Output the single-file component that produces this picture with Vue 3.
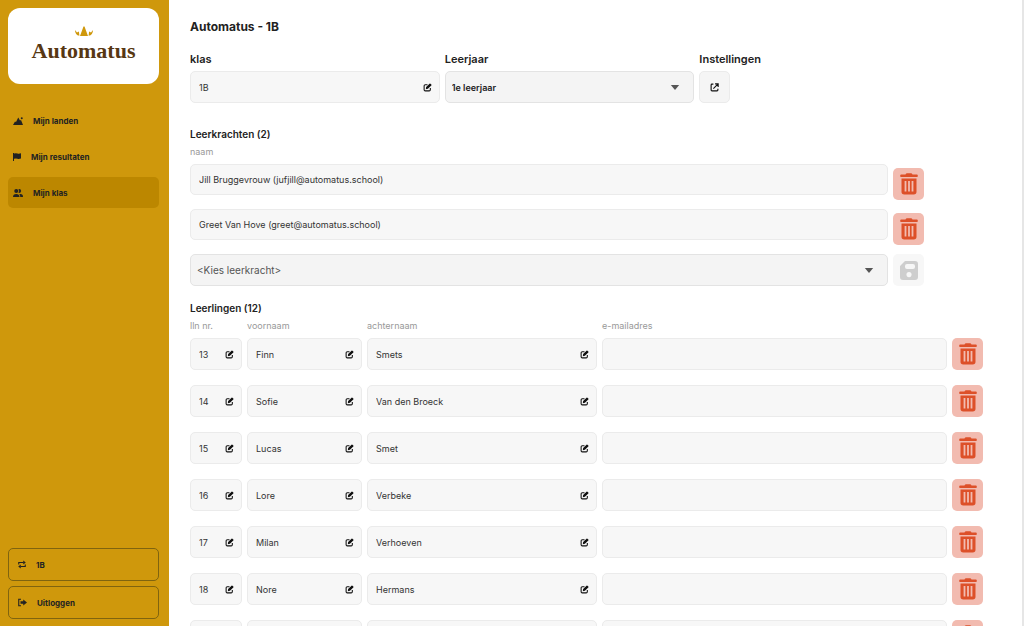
<script setup>
import { ref } from 'vue'

const klas = ref('1B')
const leerjaar = ref('1e leerjaar')
const nieuweLeerkracht = ref('')

const leerkrachten = ref([
  'Jill Bruggevrouw (jufjill@automatus.school)',
  'Greet Van Hove (greet@automatus.school)',
])

const leerlingen = ref([
  { nr: '13', voornaam: 'Finn', achternaam: 'Smets', email: '' },
  { nr: '14', voornaam: 'Sofie', achternaam: 'Van den Broeck', email: '' },
  { nr: '15', voornaam: 'Lucas', achternaam: 'Smet', email: '' },
  { nr: '16', voornaam: 'Lore', achternaam: 'Verbeke', email: '' },
  { nr: '17', voornaam: 'Milan', achternaam: 'Verhoeven', email: '' },
  { nr: '18', voornaam: 'Nore', achternaam: 'Hermans', email: '' },
  { nr: '19', voornaam: '', achternaam: '', email: '' },
])
</script>

<template>
  <svg class="sprite" aria-hidden="true">
    <symbol id="edit" viewBox="0 0 16 16">
      <path d="M8 3H4Q2 3 2 5v7q0 2 2 2h7q2 0 2-2V9" fill="none" stroke="currentColor" stroke-width="1.9" />
      <path d="M5 11l.6-3.800L11.600 1.200q.8-.8 1.600 0l1.600 1.600q.8.8 0 1.600L8.800 10.400z" fill="currentColor" />
    </symbol>
    <symbol id="trash" viewBox="0 0 18 22">
      <path fill="currentColor" fill-rule="evenodd" d="M5.500 1.500q.4-1.200 1.600-1.200h3.800q1.200 0 1.600 1.200h4.300q1 0 1 1v.700q0 .8-.8.8H1q-.8 0-.8-.8v-.7q0-1 1-1zM1.500 5.500h15v13.300q0 2.700-2.700 2.700H4.200q-2.700 0-2.700-2.700zM4.600 8v10.500h1.800V8zM8.100 8v10.500h1.800V8zM11.600 8v10.500h1.800V8z" />
    </symbol>
  </svg>
  <div class="app">
    <aside class="sidebar">
      <div class="logo">
        <svg class="crown" viewBox="0 0 18 10" aria-hidden="true">
          <path fill="#cf980c" d="M5 10L8.400.8Q9-.3 9.600.8L13 10zM4.400 9.800L3.900 5.500 2 6.500 0 4q0 5 4.400 5.800zM13.600 9.800l.5-4.300 1.900 1L18 4q0 5-4.400 5.800z" />
        </svg>
        <span class="wordmark">Automatus</span>
      </div>
      <nav class="nav">
        <a href="#landen">
          <svg width="10" height="8" viewBox="0 0 20 16" aria-hidden="true"><path fill="currentColor" d="M0 16L4 9l2 1 4.500-9L14 7l2-1 4 10z" /><circle cx="17.500" cy="2.500" r="2" fill="currentColor" /></svg>
          Mijn landen
        </a>
        <a href="#resultaten">
          <svg width="8" height="8" viewBox="0 0 16 16" aria-hidden="true"><path fill="currentColor" d="M0 0h2v1q4-1 7 0 3 1 7-.5V11q-4 1.500-7 .5-3-1-7 0v4.500H0z" /></svg>
          Mijn resultaten
        </a>
        <a href="#klas" class="active" aria-current="page">
          <svg width="10" height="8" viewBox="0 0 20 16" aria-hidden="true"><path fill="currentColor" d="M0 16q0-6 6.500-6t6.500 6zM14.500 16q.2-3.500-2-5.500Q20 9 20 16z" /><circle cx="6.500" cy="4.200" r="4" fill="currentColor" /><path fill="currentColor" d="M10.800 8q2-3.500 0-7.500 5-1.500 5.500 3.500-.5 5-5.500 4z" /></svg>
          Mijn klas
        </a>
      </nav>
      <div class="actions">
        <button type="button">
          <svg width="8" height="9" viewBox="0 0 16 16" aria-hidden="true"><path d="M1.500 8V4H11M14.500 8v4H5" fill="none" stroke="currentColor" stroke-width="2.200" /><path fill="currentColor" d="M10.500 0l5 4-5 4zM5.500 8l-5 4 5 4z" /></svg>
          <span>1B</span>
        </button>
        <button type="button">
          <svg width="9" height="9" viewBox="0 0 18 16" aria-hidden="true"><path d="M6 1.500H1.500v13H6" fill="none" stroke="currentColor" stroke-width="2.200" /><path fill="currentColor" d="M5 5.500h5.500V2L18 8l-7.500 6v-3.500H5z" /></svg>
          <span>Uitloggen</span>
        </button>
      </div>
    </aside>

    <main class="content">
      <h1>Automatus - 1B</h1>

      <section class="settings">
        <div>
          <label for="klas">klas</label>
          <div class="field">
            <input id="klas" v-model="klas" type="text" />
            <svg class="pencil"><use href="#edit" /></svg>
          </div>
        </div>
        <div>
          <label for="leerjaar">Leerjaar</label>
          <div class="field">
            <select id="leerjaar" v-model="leerjaar" class="year">
              <option>1e leerjaar</option>
              <option>2e leerjaar</option>
            </select>
            <svg class="caret" viewBox="0 0 10 6"><path d="M0 0h10L5 6z" /></svg>
          </div>
        </div>
        <div>
          <label for="instellingen">Instellingen</label>
          <button id="instellingen" type="button" class="square" title="Instellingen">
            <svg width="9" height="9" viewBox="0 0 16 16" aria-hidden="true"><path d="M6 2H3.500Q2 2 2 3.500v9Q2 14 3.500 14h9q1.500 0 1.500-1.500V10M6 10l7.500-7.500M9 1.500h5.500V7" fill="none" stroke="currentColor" stroke-width="2" /></svg>
          </button>
        </div>
      </section>

      <section class="teachers">
        <h2>Leerkrachten (2)</h2>
        <p class="caption">naam</p>
        <div v-for="(naam, i) in leerkrachten" :key="naam" class="teacher">
          <div class="field">
            <input :value="naam" type="text" readonly :aria-label="'Leerkracht ' + (i + 1)" />
          </div>
          <button type="button" class="square remove" aria-label="Verwijder leerkracht">
            <svg><use href="#trash" /></svg>
          </button>
        </div>
        <div class="teacher add">
          <div class="field">
            <select v-model="nieuweLeerkracht" aria-label="Kies leerkracht">
              <option value="">&lt;Kies leerkracht&gt;</option>
            </select>
            <svg class="caret" viewBox="0 0 10 6"><path d="M0 0h10L5 6z" /></svg>
          </div>
          <button type="button" class="square save" disabled aria-label="Bewaar leerkracht">
            <svg width="18" height="19" viewBox="0 0 18 19" aria-hidden="true"><path fill="currentColor" fill-rule="evenodd" d="M5 0h10q3 0 3 3v13q0 3-3 3H3q-3 0-3-3V5zM7 3Q5 3 5 5v1q0 2 2 2h6q2 0 2-2V5q0-2-2-2zM9 11a2.600 2.600 0 1 0 .01 0z" /></svg>
          </button>
        </div>
      </section>

      <section class="students">
        <h2>Leerlingen (12)</h2>
        <div class="student captions">
          <span>lln nr.</span>
          <span>voornaam</span>
          <span>achternaam</span>
          <span>e-mailadres</span>
        </div>
        <div v-for="l in leerlingen" :key="l.nr" class="student">
          <div class="field">
            <input v-model="l.nr" type="text" aria-label="lln nr." />
            <svg class="pencil"><use href="#edit" /></svg>
          </div>
          <div class="field">
            <input v-model="l.voornaam" type="text" aria-label="voornaam" />
            <svg class="pencil"><use href="#edit" /></svg>
          </div>
          <div class="field">
            <input v-model="l.achternaam" type="text" aria-label="achternaam" />
            <svg class="pencil"><use href="#edit" /></svg>
          </div>
          <div class="field">
            <input v-model="l.email" type="email" aria-label="e-mailadres" />
          </div>
          <button type="button" class="square remove" aria-label="Verwijder leerling">
            <svg><use href="#trash" /></svg>
          </button>
        </div>
      </section>
    </main>
  </div>
</template>

<style>
html,
body {
  overflow: hidden;
}
</style>

<style scoped>
* {
  box-sizing: border-box;
}

.sprite {
  position: absolute;
  width: 0;
  height: 0;
}

.app {
  display: grid;
  grid-template-columns: 169px 1fr;
  height: 100vh;
  background: #fff;
  color: #222;
  font-family: Inter, "Liberation Sans", sans-serif;
  font-size: 9px;
}

.sidebar {
  display: flex;
  flex-direction: column;
  padding: 8px 10px 7px 8px;
  background: #cf980c;
}

.logo {
  display: flex;
  flex-direction: column;
  align-items: center;
  height: 76px;
  padding-top: 18px;
  border-radius: 12px;
  background: #fff;
}

.crown {
  width: 18px;
  height: 10px;
}

.wordmark {
  color: #573713;
  font-family: "Liberation Serif", serif;
  font-size: 22px;
  font-weight: 700;
  line-height: 30px;
}

.nav {
  display: flex;
  flex-direction: column;
  gap: 5px;
  margin-top: 21px;
}

.nav a {
  display: flex;
  align-items: center;
  gap: 10px;
  height: 31px;
  padding-left: 5px;
  border-radius: 5px;
  color: #222;
  font-size: 8px;
  font-weight: 700;
  text-decoration: none;
}

.nav a.active {
  background: #bc8700;
}

.actions {
  display: flex;
  flex-direction: column;
  gap: 5px;
  margin-top: auto;
}

.actions button {
  display: flex;
  align-items: center;
  gap: 10px;
  height: 33px;
  padding: 0 9px;
  border: 1px solid #80640f;
  border-radius: 5px;
  background: transparent;
  color: #222;
  font: 700 8px Inter, "Liberation Sans", sans-serif;
}

.content {
  height: 100vh;
  padding: 17px 39px 0 21px;
  overflow: hidden;
  border-right: 2px solid #e6e6e6;
}

h1,
h2,
p {
  margin: 0;
}

h1 {
  font-size: 12px;
  line-height: 20px;
}

h2 {
  font-size: 10px;
  font-weight: 600;
  line-height: 18px;
}

.settings {
  display: grid;
  grid-template-columns: 250fr 250fr 284fr;
  gap: 5px;
  margin-top: 13px;
}

.settings label {
  display: block;
  margin-bottom: 3px;
  font-size: 11px;
  font-weight: 600;
  line-height: 18px;
}

.field {
  position: relative;
  min-width: 0;
}

.field input,
.field select {
  display: block;
  width: 100%;
  height: 32px;
  margin: 0;
  padding: 0 8px;
  border: 1px solid #ebebeb;
  border-radius: 5px;
  background: #f7f7f7;
  color: #333;
  font: 9px Inter, "Liberation Sans", sans-serif;
}

.field select {
  padding: 0 6px;
  border-color: #e3e3e3;
  background: #f4f4f4;
  color: #555;
  font-size: 10px;
  appearance: none;
}

.field select.year {
  color: #222;
  font-size: 9px;
  font-weight: 600;
}

.pencil {
  position: absolute;
  top: 12px;
  right: 8px;
  width: 9px;
  height: 9px;
  color: #111;
  pointer-events: none;
}

.caret {
  position: absolute;
  top: 14px;
  right: 14px;
  width: 10px;
  height: 5px;
  fill: #555;
  pointer-events: none;
}

.square {
  display: flex;
  align-items: center;
  justify-content: center;
  width: 31px;
  height: 32px;
  padding: 0;
  border: 1px solid #ebebeb;
  border-radius: 5px;
  background: #f5f5f5;
  color: #111;
}

.remove {
  border: 0;
  background: #f2bbb0;
  color: #dd5029;
}

.remove svg {
  width: 18px;
  height: 22px;
}

.save {
  border: 0;
  background: #f7f7f7;
  color: #cecece;
}

.teachers {
  margin: 22px 59px 0 0;
}

.caption {
  margin: 1px 0 4px;
  color: #999;
  line-height: 16px;
}

.teacher {
  display: grid;
  grid-template-columns: 1fr 31px;
  gap: 5px;
  height: 45px;
}

.teacher input {
  height: 31px;
}

.teacher .remove {
  margin-top: 4px;
}

.teacher.add {
  align-items: center;
  height: 32px;
}

.students {
  margin-top: 13px;
}

.student {
  display: grid;
  grid-template-columns: 52fr 115fr 230fr 345fr 31px;
  gap: 5px;
  height: 47px;
}

.student.captions {
  height: auto;
  margin: 1px 0 4px;
  color: #999;
  line-height: 16px;
}
</style>
